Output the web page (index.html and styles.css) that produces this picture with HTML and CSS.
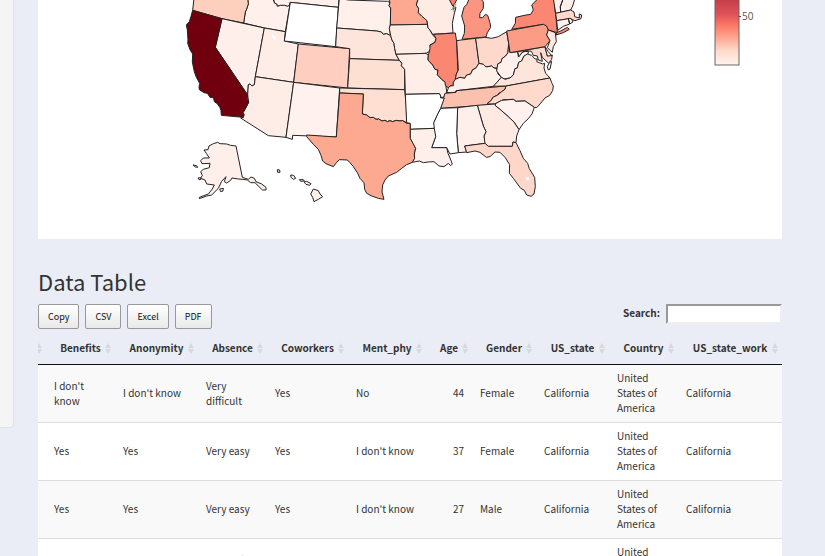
FILE: index.html
```html
<!DOCTYPE html>
<html lang="en">
<head>
<meta charset="utf-8">
<title>Data Table</title>
<link rel="stylesheet" href="styles.css">
</head>
<body>
<div class="page">
<aside class="sidebar"></aside>
<main class="content">
<section class="map-card">
<svg class="map" viewBox="38 0 744 239" role="img" aria-label="Responses by US state">
<defs><linearGradient id="scale" x1="0" y1="0" x2="0" y2="1"><stop offset=".2" stop-color="#c03a47"/><stop offset=".4" stop-color="#dd5257"/><stop offset=".53" stop-color="#fd7665"/><stop offset=".68" stop-color="#fda792"/><stop offset=".83" stop-color="#fed9ca"/><stop offset="1" stop-color="#fff3ee"/></linearGradient></defs>
<g class="states" transform="scale(.33333)">
<path fill="#fff0eb" d="M820-5 824 10 830 12 832 19 842 16 848 17 854 16 862 19 869 16 871 7 1015 22 1017-5Z"/>
<path fill="#fff0eb" d="M743-5 745 12 740 27 736 36 731 69 793 84 856 95 871 7 869 16 862 19 854 16 842 16 832 19 830 12 824 10 818-5Z"/>
<path fill="#fdcfbd" d="M582-5 578 31 666 56 731 69 736 36 740 27 745 12 743-5Z"/>
<path fill="#ffefeb" d="M666 56 793 84 766 230 763 254 756 258 750 252 745 254 743 285 646 142Z"/>
<path fill="#feede6" d="M793 84 856 95 853 123 895 132 881 247 766 230Z"/>
<path class="water" d="M816 100 822 108 827 110 828 122 820 117 816 108Z"/>
<path fill="#feede6" d="M766 230 881 247 858 412 805 407 722 354 730 352 732 344 729 338 735 328 746 307 743 285 745 254 750 252 756 258 763 254Z"/>
<path fill="#70000d" d="M578 31 666 56 646 142 743 285 742 296 746 307 735 328 729 338 732 344 730 352 664 346 663 332 660 323 652 311 643 305 641 295 636 292 631 293 622 280 612 278 598 269 597 262 599 250 589 232 583 215 577 186 578 162 570 149 563 130 564 120 562 90 559 75 568 65 573 49Z"/>
<path fill="#fff" d="M871 7 1015 22 1007 140 853 123Z"/>
<path fill="#fecfc0" d="M895 132 1049 146 1043 264 881 247Z"/>
<path fill="#fff1ed" d="M881 247 1019 264 1009 411 878 406 877 418 858 412Z"/>
<path fill="#fff0ec" d="M1018-5 1045 0 1163 4 1170 8 1167 17 1172 24 1171 75 1168 85 1172 107 1160 101 1150 103 1144 96 1130 93 1010 84Z"/>
<path fill="#fee5dc" d="M1010 84 1130 93 1144 96 1150 103 1160 101 1172 107 1176 120 1182 130 1184 145 1188 163 1198 181 1049 176 1049 146 1007 140Z"/>
<path fill="#fee0d3" d="M1049 176 1198 181 1206 190 1204 197 1214 208 1214 269 1043 264Z"/>
<path fill="#fedfd2" d="M1019 264 1214 269 1219 320 1220 368 1208 362 1200 363 1188 361 1178 365 1170 362 1162 365 1155 361 1146 363 1136 357 1128 358 1120 352 1110 353 1100 345 1087 342 1090 282 1019 279Z"/>
<path fill="#fda890" d="M1019 279 1090 282 1087 342 1100 345 1110 353 1120 352 1128 358 1136 357 1146 363 1155 361 1162 365 1170 362 1178 365 1188 361 1200 363 1208 362 1220 370 1231 370 1231 415 1240 430 1247 445 1243 462 1244 475 1237 487 1220 494 1205 505 1190 517 1165 528 1155 540 1148 555 1146 576 1152 598 1135 595 1115 588 1100 580 1094 568 1092 548 1080 535 1072 518 1060 500 1050 488 1042 480 1018 479 1010 487 1000 500 978 491 968 483 963 466 955 448 941 434 920 410 920 405 1009 411Z"/>
<path fill="#fda890" d="M1166-5 1170 8 1167 17 1172 24 1171 75 1283 73 1281 62 1265 48 1255 38 1256 25 1249 15 1255-5Z"/>
<path fill="#feebe4" d="M1171 75 1283 73 1284 84 1290 90 1298 105 1308 115 1305 127 1290 135 1292 146 1287 155 1278 160 1188 163 1184 145 1182 130 1176 120 1172 107 1168 85Z"/>
<path fill="#feebe4" d="M1255-5 1249 15 1256 25 1255 38 1265 48 1281 62 1284 84 1290 90 1298 103 1359 99 1357 70 1362 45 1368 22 1360 28 1360 10 1348-5Z"/>
<path fill="#fa806d" d="M1346-5 1358 18 1365 10 1372-5Z"/>
<path class="shore" d="M1368 12 1361 24 1352 30M1366 18 1360 35"/>
<path fill="#ffede7" d="M1188 163 1278 160 1285 166 1284 180 1298 195 1305 208 1314 210 1312 224 1325 238 1336 246 1340 275 1335 290 1322 294 1322 288 1318 281 1216 283 1214 208 1204 197 1206 190 1198 181Z"/>
<path fill="#fb8672" d="M1301 103 1366 99 1370 125 1373 200 1374 213 1369 222 1368 236 1360 247 1360 257 1350 258 1345 264 1336 256 1335 246 1325 238 1312 224 1314 210 1305 208 1298 195 1284 180 1285 166 1290 146 1290 136 1305 127 1308 115Z"/>
<path fill="#fb9480" d="M1386 118 1458 111 1462 98 1472 82 1470 68 1463 46 1456 43 1448 53 1439 53 1440 40 1450 25 1450 5 1440-5 1408-5 1400 14 1392 22 1385 48 1394 78 1393 100Z"/>
<path fill="#fdc8b7" d="M1370 122 1384 120 1427 115 1437 190 1427 205 1418 209 1412 222 1400 225 1394 235 1380 232 1366 238 1369 222 1375 210Z"/>
<path fill="#fed8ca" d="M1427 115 1455 112 1475 115 1495 110 1520 95 1526 130 1524 158 1517 168 1506 176 1503 187 1493 192 1493 204 1482 204 1475 198 1458 201 1450 193 1437 190Z"/>
<path fill="#ffefe9" d="M1437 190 1450 193 1458 201 1475 198 1482 204 1490 206 1494 222 1504 232 1490 250 1480 259 1368 272 1366 277 1340 278 1345 264 1350 258 1360 257 1360 247 1366 238 1380 232 1394 235 1400 225 1412 222 1418 209 1427 205Z"/>
<path fill="#fcc1ae" d="M1335 280 1368 277 1370 272 1518 258 1515 268 1504 276 1496 280 1492 286 1480 291 1472 303 1463 309 1463 315 1322 325 1326 309Z"/>
<path fill="#fff0ec" d="M1526 130 1530 158 1553 155 1555 170 1565 158 1575 154 1586 155 1582 165 1572 168 1565 183 1556 187 1552 204 1545 206 1540 225 1530 234 1512 237 1504 232 1490 213 1493 192 1503 187 1506 176 1517 168 1524 158Z"/>
<path fill="#fed9cd" d="M1553 155 1635 140 1642 168 1657 165 1655 178 1646 190 1635 180 1627 172 1622 158 1627 184 1615 180 1612 168 1600 166 1594 154 1580 152 1568 155 1557 170Z"/>
<path fill="#fff0ec" d="M1635 140 1645 155 1655 167 1642 168Z"/>
<path fill="#fee5dc" d="M1480 259 1504 232 1515 238 1530 234 1540 225 1545 206 1552 204 1556 187 1565 183 1572 168 1582 162 1595 166 1605 177 1612 177 1610 185 1628 192 1634 190 1632 204 1637 220 1650 234 1518 258Z"/>
<path fill="#fff0ec" d="M1648 188 1655 184 1650 207 1645 210 1642 200Z"/>
<path fill="#fed9cc" d="M1518 258 1650 234 1655 248 1660 258 1658 272 1649 286 1635 294 1620 312 1610 323 1603 322 1575 303 1548 304 1540 298 1510 299 1485 312 1463 312 1463 309 1472 303 1480 291 1492 286 1504 276 1515 268Z"/>
<path fill="#fff2ee" d="M1485 312 1505 301 1540 298 1548 304 1575 303 1603 322 1596 342 1585 356 1570 370 1557 389 1542 366 1525 350 1500 328 1486 317Z"/>
<path fill="#feeae3" d="M1432 316 1485 312 1486 317 1500 328 1525 350 1542 366 1557 389 1550 408 1548 428 1539 426 1537 439 1465 439 1453 430 1452 408 1458 395 1450 378Z"/>
<path fill="#ffefea" d="M1373 323 1432 316 1450 378 1458 395 1452 408 1455 430 1394 438 1400 456 1375 458 1370 400Z"/>
<path fill="#fff" d="M1322 325 1373 323 1370 400 1375 458 1350 462 1340 443 1295 443 1307 410 1300 385 1301 368 1314 340Z"/>
<path fill="#fff" d="M1216 283 1318 281 1322 288 1322 294 1333 294 1322 325 1314 340 1301 368 1303 385 1231 388 1231 370 1220 368Z"/>
<path fill="#ffefea" d="M1231 388 1303 385 1307 410 1295 443 1340 443 1344 460 1350 474 1357 492 1352 497 1345 490 1332 500 1317 498 1302 485 1285 486 1270 488 1258 483 1237 487 1244 475 1243 462 1247 445 1231 415Z"/>
<path fill="#fed6ca" d="M1394 438 1455 430 1465 439 1537 439 1539 426 1548 428 1560 452 1570 475 1583 490 1588 506 1604 532 1606 560 1602 582 1593 589 1580 585 1573 571 1562 565 1540 535 1528 520 1529 494 1515 472 1500 457 1485 456 1470 470 1459 472 1440 457 1425 453 1400 458Z"/>
<circle class="water" cx="1583" cy="536" r="5"/>
<path fill="#fb8672" d="M1535 88 1546 70 1547 52 1578 45 1592 43 1600 30 1595 15 1615-5 1662-5 1665 30 1668 50 1672 98 1645 90 1630 73Z"/>
<path fill="#fb8672" d="M1670 98 1682 93 1702 82 1708 88 1690 98 1668 105Z"/>
<path fill="#fc9c86" d="M1520 93 1630 73 1640 78 1645 92 1640 105 1650 122 1635 140 1530 158 1526 130Z"/>
<path fill="#fee9df" d="M1645 90 1666 98 1669 125 1660 140 1657 157 1642 143 1650 122 1640 105Z"/>
<path fill="#fff0ec" d="M1660-5 1667 40 1682 37 1681 20 1690-5ZM1690-5 1681 20 1682 37 1712 30 1718 18 1725-5Z"/>
<path fill="#fed9cc" d="M1667 40 1712 30 1722 36 1724 50 1738 54 1738 42 1745 45 1743 56 1725 62 1708 56 1670 62Z"/>
<path fill="#fff0ec" d="M1670 62 1705 56 1709 72 1690 79 1673 91ZM1705 55 1714 56 1719 66 1709 72Z"/>
<path fill="#ffefeb" d="M653 427 660 431 680 432 692 436 708 438 727 532 745 538 753 531 763 535 768 545 785 552 798 562 798 570 787 570 765 548 752 548 742 540 727 538 715 537 696 534 692 541 680 549 673 545 678 530 665 544 655 565 635 585 620 588 598 596 598 592 625 582 637 567 643 555 620 552 615 540 602 535 607 526 602 515 610 508 628 503 630 490 606 491 602 482 610 474 628 474 619 460 612 450 624 449 627 438 640 431Z"/>
<path fill="#ffefeb" d="M579 495 590 497 593 502 586 501ZM594 534 602 533 603 538 597 539ZM659 567 670 565 669 573 662 575ZM832 509 839 510 840 517 833 517ZM872 525 881 526 887 535 880 538 873 532ZM898 539 910 539 913 543 902 544ZM912 546 920 544 933 551 929 556 918 553ZM940 567 955 572 960 582 968 590 955 598 942 605 938 592 932 582Z"/>
</g>
<rect x="715" y="-20" width="24" height="85" fill="url(#scale)" stroke="#6d6467"/>
<path d="M739 16.500h2" stroke="#444"/>
<text class="tick" x="742" y="20">50</text>
</svg>
</section>
<h2 class="title">Data Table</h2>
<div class="toolbar">
<div class="buttons"><button type="button">Copy</button><button type="button">CSV</button><button type="button">Excel</button><button type="button">PDF</button></div>
<div class="search"><label for="search">Search:</label><input id="search" type="search"></div>
</div>
<table class="data">
<colgroup><col class="c-edge"><col class="c-benefits"><col class="c-anonymity"><col class="c-absence"><col class="c-coworkers"><col class="c-ment"><col class="c-age"><col class="c-gender"><col class="c-state"><col class="c-country"><col class="c-work"></colgroup>
<thead><tr><th></th><th>Benefits</th><th>Anonymity</th><th>Absence</th><th>Coworkers</th><th>Ment_phy</th><th>Age</th><th>Gender</th><th>US_state</th><th>Country</th><th>US_state_work</th></tr></thead>
<tbody>
<tr><td></td><td>I don't know</td><td>I don't know</td><td>Very difficult</td><td>Yes</td><td>No</td><td class="num">44</td><td>Female</td><td>California</td><td>United States of America</td><td>California</td></tr>
<tr><td></td><td>Yes</td><td>Yes</td><td>Very easy</td><td>Yes</td><td>I don't know</td><td class="num">37</td><td>Female</td><td>California</td><td>United States of America</td><td>California</td></tr>
<tr><td></td><td>Yes</td><td>Yes</td><td>Very easy</td><td>Yes</td><td>I don't know</td><td class="num">27</td><td>Male</td><td>California</td><td>United States of America</td><td>California</td></tr>
<tr><td></td><td>Yes</td><td>Yes</td><td>Somewhat easy</td><td>Yes</td><td>Yes</td><td class="num">30</td><td>Male</td><td>California</td><td>United States of America</td><td>California</td></tr>
</tbody>
</table>
</main>
</div>
</body>
</html>
```
FILE: styles.css
```css
* { box-sizing: border-box; }

body {
  margin: 0;
  height: 100vh;
  overflow: hidden;
  background: #eaedf5;
  color: #333;
  font-family: "Noto Sans CJK SC", "Open Sans", sans-serif;
  font-size: 10px;
  line-height: 15px;
}

.page {
  display: flex;
  align-items: flex-start;
  gap: 24px;
  padding-right: 43px;
}

.sidebar {
  flex: 0 0 14px;
  height: 428px;
  background: #f5f5f5;
  border: solid #e3e3e3;
  border-width: 0 1px 1px 0;
  border-radius: 0 0 4px 0;
}

.content { flex: 1; min-width: 0; }

.map-card { background: #fff; }
.map { display: block; width: 100%; }
.states path { stroke: #222; stroke-width: 3; stroke-linejoin: round; }
.states .water { fill: #fff; stroke: none; }
.states .shore { fill: none; stroke: #999; }
.tick { font: 10px "Open Sans", sans-serif; fill: #555; }

.title {
  margin: 29px 0 9px;
  font-size: 22px;
  font-weight: 400;
  line-height: 27px;
}

.toolbar {
  display: flex;
  justify-content: space-between;
  align-items: flex-start;
}

.buttons { display: flex; gap: 6px; }

button {
  height: 25px;
  padding: 0 9px;
  border: 1px solid #999;
  border-radius: 2px;
  background: linear-gradient(#fff, #e9e9e9);
  color: #111;
  font-family: inherit;
  font-size: 9px;
  line-height: 23px;
}

.search {
  display: flex;
  align-items: flex-start;
  gap: 6px;
  font-weight: 700;
  line-height: 18px;
}

.search input {
  width: 116px;
  height: 20px;
  padding: 1px;
  border: 2px solid;
  border-color: #999 #eee #eee #999;
  background: #fff;
  font: inherit;
}

.data {
  width: 100%;
  table-layout: fixed;
  border-collapse: separate;
  border-spacing: 0;
}

.c-edge { width: 8px; }
.c-benefits, .c-absence, .c-country { width: 69px; }
.c-anonymity { width: 83px; }
.c-coworkers { width: 81px; }
.c-ment { width: 78px; }
.c-age { width: 46px; }
.c-gender { width: 64px; }
.c-state { width: 73px; }
.c-work { width: 104px; }

th {
  position: relative;
  height: 36px;
  padding: 2px 8px 0;
  border-bottom: 1px solid #111;
  font-weight: 700;
  text-align: center;
  white-space: nowrap;
}

/* sort arrows */
th::before, th::after {
  content: "";
  position: absolute;
  right: 4px;
  border: solid transparent;
  border-width: 0 3px;
}
th::before { top: 14px; border-bottom: 5px solid #d8d9dc; }
th::after { top: 20px; border-top: 5px solid #d8d9dc; }

td {
  padding: 5px 8px 7px;
  border-bottom: 1px solid #ddd;
  vertical-align: middle;
}
td:first-child, th:first-child { padding-left: 0; padding-right: 0; overflow: hidden; }

tbody tr { background: #fff; }
tbody tr:nth-child(odd) { background: #f9f9f9; }
.num { text-align: right; }
```
